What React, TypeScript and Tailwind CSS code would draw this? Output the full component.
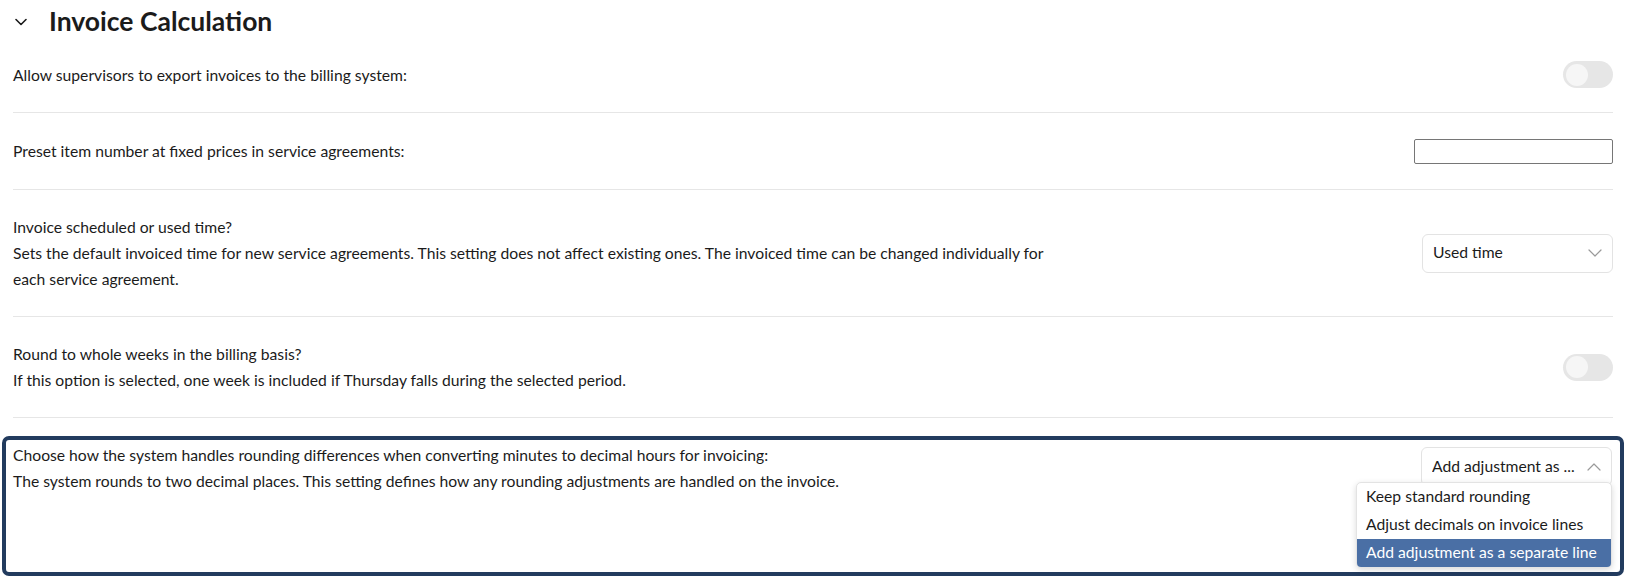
import { useState } from 'react';

function Toggle() {
  return (
    <div className="flex h-[27px] w-[50px] shrink-0 items-center rounded-full bg-[#e6e6e6] px-[3px]">
      <div className="h-[22px] w-[22px] rounded-full bg-[#f6f6f6]" />
    </div>
  );
}

function Chevron({ up = false }: { up?: boolean }) {
  return (
    <svg width="14" height="8" viewBox="0 0 14 8" fill="none">
      <path
        d={up ? 'M1 7L7 1L13 7' : 'M1 1L7 7L13 1'}
        stroke="#9a9a9a"
        strokeWidth="1.2"
        strokeLinecap="round"
        strokeLinejoin="round"
      />
    </svg>
  );
}

function Row({ children, control }: { children: React.ReactNode; control: React.ReactNode }) {
  return (
    <div className="flex items-center justify-between border-b border-[#e6e6e6] py-[24px]">
      <div className="leading-[26px]">{children}</div>
      {control}
    </div>
  );
}

const options = [
  'Keep standard rounding',
  'Adjust decimals on invoice lines',
  'Add adjustment as a separate line',
];

export default function App() {
  const [selected] = useState(2);

  return (
    <div className="min-h-screen bg-white px-[13px] text-[15.7px] text-[#1b1b1b] [font-family:Lato,'Noto_Sans',sans-serif]">
      {/* Section header */}
      <div className="flex h-[37px] items-center gap-[22px] pl-[2px] pt-[6px]">
        <svg width="12" height="8" viewBox="0 0 12 8" fill="none">
          <path d="M1 1.5L6 6.5L11 1.5" stroke="#1b1b1b" strokeWidth="1.6" strokeLinecap="round" strokeLinejoin="round" />
        </svg>
        <h2 className="text-[26.5px] font-bold">Invoice Calculation</h2>
      </div>

      <Row control={<Toggle />}>
        <p>Allow supervisors to export invoices to the billing system:</p>
      </Row>

      <Row control={<input className="h-[25px] w-[199px] rounded-[2px] border border-[#767676] outline-none" />}>
        <p className="py-[1px]">Preset item number at fixed prices in service agreements:</p>
      </Row>

      <Row
        control={
          <div className="flex h-[39px] w-[191px] shrink-0 items-center justify-between rounded-[6px] border border-[#e3e3e3] pl-[10px] pr-[10px]">
            <span>Used time</span>
            <Chevron />
          </div>
        }
      >
        <p>Invoice scheduled or used time?</p>
        <p className="max-w-[1050px]">
          Sets the default invoiced time for new service agreements. This setting does not affect existing ones. The
          invoiced time can be changed individually for each service agreement.
        </p>
      </Row>

      <Row control={<Toggle />}>
        <p>Round to whole weeks in the billing basis?</p>
        <p>If this option is selected, one week is included if Thursday falls during the selected period.</p>
      </Row>

      {/* Focused setting */}
      <div className="-mx-[11px] mt-[18px] h-[140px] rounded-[7px] border-[4px] border-[#223b5e] pl-[7px] pr-[8px] pt-[2px]">
        <div className="flex items-start justify-between">
          <div className="leading-[26px]">
            <p>Choose how the system handles rounding differences when converting minutes to decimal hours for invoicing:</p>
            <p>The system rounds to two decimal places. This setting defines how any rounding adjustments are handled on the invoice.</p>
          </div>
          <div className="relative mt-[5px] w-[191px] shrink-0">
            <div className="flex h-[39px] items-center justify-between rounded-[6px] border border-[#e3e3e3] pl-[10px] pr-[10px]">
              <span className="truncate pr-[10px]">Add adjustment as ...</span>
              <Chevron up />
            </div>
            <ul className="absolute right-0 top-[35px] z-10 w-[256px] overflow-hidden rounded-[5px] border border-[#e3e3e3] bg-white shadow-[0_2px_6px_rgba(0,0,0,0.15)]">
              {options.map((o, i) => (
                <li
                  key={o}
                  className={
                    i === selected
                      ? 'flex h-[28px] items-center bg-[#4a6fa5] px-[9px] text-white'
                      : 'flex h-[28px] items-center px-[9px]'
                  }
                >
                  {o}
                </li>
              ))}
            </ul>
          </div>
        </div>
      </div>
    </div>
  );
}
